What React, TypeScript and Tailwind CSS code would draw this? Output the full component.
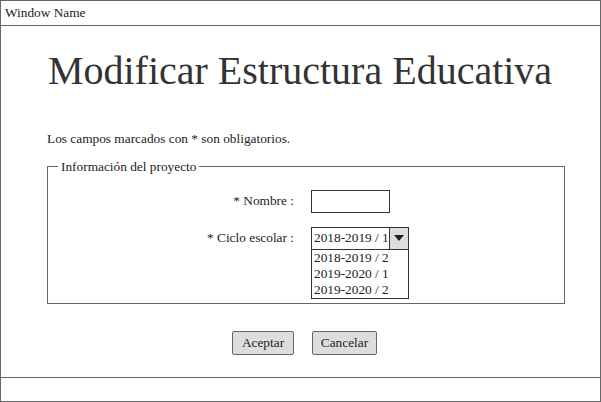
export default function App() {
  const font = { fontFamily: '"Liberation Serif", "Times New Roman", serif' }
  return (
    <div className="w-[601px] h-[402px] bg-white text-[#222] flex flex-col border border-[#666]" style={font}>
      <div className="h-[25px] border-b border-[#666] flex items-center px-[4px] text-[13.33px]">Window Name</div>
      <div className="flex-1 flex flex-col pl-[46px]">
        <h1 className="w-[506px] text-[40px] leading-none text-center whitespace-nowrap text-[#333] mt-[25px]">Modificar Estructura Educativa</h1>
        <p className="text-[13.33px] mt-[38px]">Los campos marcados con * son obligatorios.</p>
        <fieldset className="w-[518px] border border-[#666] mt-[8px] h-[147px] pl-[10px] pr-[10px]">
          <legend className="text-[13.33px] px-[3px] text-[#222]">Información del proyecto</legend>
          <div className="grid grid-cols-[236px_auto] gap-x-[17px] mt-[13px] items-center">
            <span className="text-[13.33px] text-right">* Nombre :</span>
            <input className="w-[79px] h-[23px] border border-[#333] outline-none" />
            <span className="text-[13.33px] text-right mt-[14px] self-start pt-[1px]">* Ciclo escolar :</span>
            <div className="relative w-[98px] mt-[14px]">
              <div className="flex h-[23px] border border-[#333] text-[13.33px] whitespace-nowrap">
                <span className="flex-1 flex items-center pl-[2px]">2018-2019 / 1</span>
                <span className="w-[20px] bg-[#ddd] border-l border-[#333] flex items-center justify-center">
                  <svg width="10" height="6" viewBox="0 0 10 6"><path d="M0 0h10L5 6z" fill="#222" /></svg>
                </span>
              </div>
              <div className="absolute left-0 top-[22px] w-[98px] border border-[#333] bg-white text-[13.33px] leading-[16px] pl-[2px] whitespace-nowrap">
                <div>2018-2019 / 2</div>
                <div>2019-2020 / 1</div>
                <div>2019-2020 / 2</div>
              </div>
            </div>
          </div>
        </fieldset>
        <div className="flex gap-[18px] mt-[27px] pl-[185px] text-[13.33px]">
          <button className="w-[62px] h-[24px] bg-[#ddd] border border-[#666] rounded-[2px]">Aceptar</button>
          <button className="w-[65px] h-[24px] bg-[#ddd] border border-[#666] rounded-[2px]">Cancelar</button>
        </div>
      </div>
      <div className="h-[24px] border-t border-[#666]"></div>
    </div>
  )
}
